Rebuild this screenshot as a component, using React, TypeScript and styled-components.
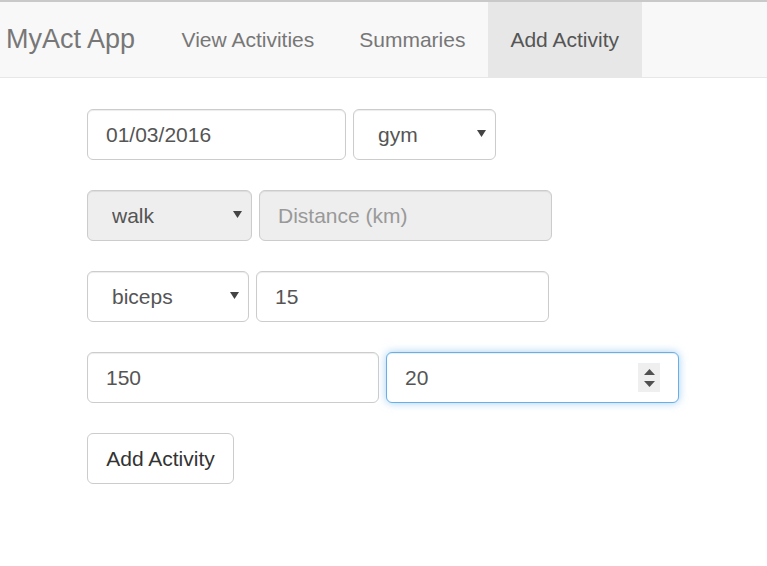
import React from "react";
import styled, { createGlobalStyle, css } from "styled-components";

const Global = createGlobalStyle`
  html, body { margin: 0; padding: 0; background: #fff; }
  body { font-family: "Liberation Sans", Arial, sans-serif; }
  * { box-sizing: border-box; }
`;

const Navbar = styled.nav`
  display: flex;
  align-items: stretch;
  height: 78px;
  background: #f8f8f8;
  border-top: 2px solid #c9c9c9;
  border-bottom: 1px solid #e7e7e7;
`;

const Brand = styled.a`
  display: flex;
  align-items: center;
  padding: 0 24px 0 6px;
  font-size: 27px;
  color: #777;
  text-decoration: none;
`;

const NavLink = styled.a<{ $active?: boolean }>`
  display: flex;
  align-items: center;
  padding: 0 22.5px;
  font-size: 21px;
  color: ${(p) => (p.$active ? "#555" : "#777")};
  background: ${(p) => (p.$active ? "#e7e7e7" : "transparent")};
  text-decoration: none;
`;

const Form = styled.form`
  display: flex;
  flex-direction: column;
  gap: 30px;
  padding: 31px 0 0 87px;
`;

const Row = styled.div`
  display: flex;
  gap: 7px;
`;

const fieldBase = css`
  height: 51px;
  border: 1px solid #ccc;
  border-radius: 6px;
  font-family: "Liberation Sans", Arial, sans-serif;
  font-size: 21px;
  color: #555;
  background: #fff;
  box-shadow: inset 0 1px 1px rgba(0, 0, 0, 0.075);
  outline: none;
  margin: 0;
`;

const Input = styled.input<{ $w: number; $focused?: boolean }>`
  ${fieldBase};
  width: ${(p) => p.$w}px;
  padding: 0 18px;
  &::placeholder { color: #999; }
  &:disabled { background: #eee; }
  &::-webkit-outer-spin-button,
  &::-webkit-inner-spin-button { -webkit-appearance: none; margin: 0; }
  -moz-appearance: textfield;
  ${(p) =>
    p.$focused &&
    css`
      border-color: #66afe9;
      box-shadow: inset 0 1px 1px rgba(0, 0, 0, 0.075), 0 0 8px rgba(102, 175, 233, 0.6);
    `}
`;

const SelectWrap = styled.div<{ $w: number }>`
  position: relative;
  width: ${(p) => p.$w}px;
  display: flex;
`;

const Select = styled.select`
  ${fieldBase};
  flex: 1;
  appearance: none;
  -webkit-appearance: none;
  padding: 0 30px 0 24px;
  &:disabled { background: #eee; opacity: 1; }
`;

const Arrow = styled.svg`
  position: absolute;
  right: 10px;
  top: 21px;
  width: 9px;
  height: 7px;
  pointer-events: none;
`;

const NumberWrap = styled.div<{ $w: number }>`
  position: relative;
  display: flex;
  width: ${(p) => p.$w}px;
`;

const Spinner = styled.div`
  position: absolute;
  right: 19px;
  top: 11px;
  width: 22px;
  height: 29px;
  background: #efefef;
  display: flex;
  flex-direction: column;
  align-items: center;
  justify-content: center;
  gap: 6px;
`;

const Button = styled.button`
  ${fieldBase};
  width: 147px;
  color: #333;
  box-shadow: none;
  padding: 0;
  cursor: pointer;
`;

const ArrowIcon = () => (
  <Arrow viewBox="0 0 9 7">
    <polygon points="0,0 9,0 4.5,7" fill="#444" />
  </Arrow>
);

const Sel = ({ w, value, disabled }: { w: number; value: string; disabled?: boolean }) => (
  <SelectWrap $w={w}>
    <Select defaultValue={value} disabled={disabled}>
      <option value={value}>{value}</option>
    </Select>
    <ArrowIcon />
  </SelectWrap>
);

export default function App() {
  return (
    <>
      <Global />
      <Navbar>
        <Brand href="#">MyAct App</Brand>
        <NavLink href="#">View Activities</NavLink>
        <NavLink href="#">Summaries</NavLink>
        <NavLink href="#" $active>
          Add Activity
        </NavLink>
      </Navbar>
      <Form onSubmit={(e) => e.preventDefault()}>
        <Row>
          <Input $w={259} type="text" defaultValue="01/03/2016" />
          <Sel w={143} value="gym" />
        </Row>
        <Row>
          <Sel w={165} value="walk" disabled />
          <Input $w={293} type="text" placeholder="Distance (km)" disabled />
        </Row>
        <Row>
          <Sel w={162} value="biceps" />
          <Input $w={293} type="text" defaultValue="15" />
        </Row>
        <Row>
          <Input $w={292} type="number" defaultValue="150" />
          <NumberWrap $w={293}>
            <Input $w={293} type="number" defaultValue="20" $focused />
            <Spinner>
              <svg width="11" height="6" viewBox="0 0 11 6">
                <polygon points="0,6 11,6 5.5,0" fill="#505050" />
              </svg>
              <svg width="11" height="6" viewBox="0 0 11 6">
                <polygon points="0,0 11,0 5.5,6" fill="#505050" />
              </svg>
            </Spinner>
          </NumberWrap>
        </Row>
        <Row>
          <Button type="submit">Add Activity</Button>
        </Row>
      </Form>
    </>
  );
}
